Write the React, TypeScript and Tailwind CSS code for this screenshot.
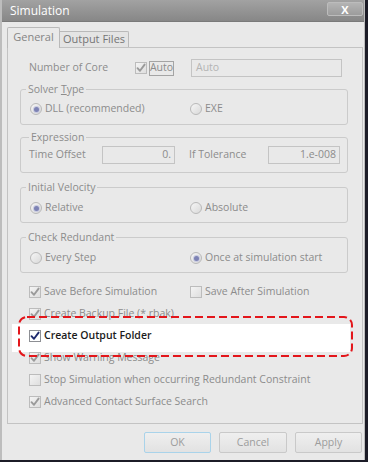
import type { ReactNode } from "react";

const GRAY = "text-[#8c8c8c]";

function Check({ on = true, dark = false }: { on?: boolean; dark?: boolean }) {
  return (
    <span
      className={`flex h-[12px] w-[12px] shrink-0 items-center justify-center border ${
        dark
          ? "border-[#8d8f94] bg-white"
          : "border-[#bcbcbc] bg-gradient-to-br from-[#f4f4f4] to-[#dedede]"
      }`}
    >
      {on && (
        <svg width="10" height="10" viewBox="0 0 10 10" fill="none">
          <path
            d="M1.5 5.2 L4 7.8 L8.6 1.6"
            stroke={dark ? "#1e2a6e" : "#9a9a9a"}
            strokeWidth="1.9"
            strokeLinecap="round"
            strokeLinejoin="round"
          />
        </svg>
      )}
    </span>
  );
}

function Radio({ on = false }: { on?: boolean }) {
  return (
    <span className="flex h-[12px] w-[12px] shrink-0 items-center justify-center rounded-full border border-[#b9b9b9] bg-gradient-to-br from-[#f6f6f6] to-[#d9d9d9]">
      {on && <span className="h-[5px] w-[5px] rounded-full bg-[#7d82b4] ring-1 ring-[#c9cbe0]" />}
    </span>
  );
}

function Group({
  title,
  pt,
  legendLeft = "left-[5px]",
  children,
}: {
  title: ReactNode;
  pt: string;
  legendLeft?: string;
  children: ReactNode;
}) {
  return (
    <div className={`relative h-[36px] w-[328px] rounded-[3px] border border-[#cbcbcb] ${pt}`}>
      <span className={`absolute -top-[8px] ${legendLeft} bg-[#e9e9e9] px-[2px] leading-[14px] ${GRAY}`}>
        {title}
      </span>
      {children}
    </div>
  );
}

function RadioRow({ a, b, first }: { a: string; b: string; first: boolean }) {
  return (
    <div className="flex h-[14px] items-center pl-[9px]">
      <div className="flex w-[160px] items-center gap-[3px]">
        <Radio on={first} />
        <span className={GRAY}>{a}</span>
      </div>
      <div className="flex items-center gap-[3px]">
        <Radio on={!first} />
        <span className={GRAY}>{b}</span>
      </div>
    </div>
  );
}

function CheckRow({ label, on = true, right }: { label: string; on?: boolean; right?: ReactNode }) {
  return (
    <div className="flex h-[22px] items-center pl-[9px]">
      <div className="flex w-[161px] shrink-0 items-center gap-[3px]">
        <Check on={on} />
        <span className={`whitespace-nowrap ${GRAY}`}>{label}</span>
      </div>
      {right}
    </div>
  );
}

export default function App() {
  return (
    <div className="h-[463px] w-[371px] bg-white font-['Segoe_UI','Open_Sans',sans-serif] text-[10.5px]">
      <div className="h-[462px] w-[368px] border-b-[2px] border-r-[3px] border-[#1c1c27]">
        <div className="flex h-full flex-col border-l-[2px] border-r border-[#bdbdbd] bg-[#e9e9e9]">
          {/* title bar */}
          <div className="flex h-[22px] shrink-0 items-start justify-between border-b border-[#7a7a7a] bg-gradient-to-b from-[#a2a2a2] to-[#878787]">
            <span className="pl-[8px] pt-[3px] text-[12px] leading-[16px] text-white">Simulation</span>
            <button className="mr-[1px] mt-[2px] flex h-[14px] w-[36px] items-center justify-center rounded-[2px] border border-[#bcbcbc] bg-gradient-to-b from-[#b4b4b4] to-[#9c9c9c] text-[11px] font-bold leading-none text-white">
              X
            </button>
          </div>

          {/* tabs */}
          <div className="mt-[5px] flex items-end pl-[5px]">
            <div className="relative z-10 -mb-px flex h-[21px] w-[53px] items-center justify-center rounded-t-[2px] border border-b-0 border-[#b9b9b9] bg-[#e9e9e9] pb-[2px] text-[11px] text-[#858585]">
              General
            </div>
            <div className="flex h-[16px] w-[69px] items-center justify-center rounded-tr-[2px] border border-b-0 border-l-0 border-[#b9b9b9] bg-[#e4e4e4] text-[11px] text-[#757575]">
              Output Files
            </div>
          </div>

          {/* panel */}
          <div className="relative ml-[5px] h-[377px] w-[356px] border border-[#c3c3c3] px-[12px]">
            {/* number of core */}
            <div className="mt-[11px] flex h-[18px] items-center pl-[9px]">
              <span className={`w-[106px] ${GRAY}`}>Number of Core</span>
              <Check />
              <span className={`ml-[2px] flex h-[15px] w-[25px] items-center justify-center border border-[#a4a4a4] ${GRAY}`}>
                Auto
              </span>
              <div className="ml-[17px] flex h-[18px] w-[151px] items-center border border-[#c4c4c4] pl-[4px] text-[#b4b4b4]">
                Auto
              </div>
            </div>

            <div className="mt-[12px]">
              <Group
                pt="pt-[12px]"
                title={
                  <>
                    Solver <span className="underline">T</span>ype
                  </>
                }
              >
                <RadioRow a="DLL (recommended)" b="EXE" first />
              </Group>
            </div>

            <div className="mt-[12px]">
              <Group pt="pt-[8px]" title="Expression" legendLeft="left-[8px]">
                <div className="flex h-[18px] items-center pl-[8px]">
                  <span className={`w-[73px] ${GRAY}`}>Time Offset</span>
                  <div className={`flex h-[18px] w-[73px] items-center justify-end border border-[#c4c4c4] pr-[3px] ${GRAY}`}>
                    0.
                  </div>
                  <span className={`ml-[14px] w-[79px] ${GRAY}`}>If Tolerance</span>
                  <div className={`flex h-[18px] w-[72px] items-center justify-end border border-[#c4c4c4] pr-[3px] ${GRAY}`}>
                    1.e-008
                  </div>
                </div>
              </Group>
            </div>

            <div className="mt-[14px]">
              <Group pt="pt-[13px]" title="Initial Velocity">
                <RadioRow a="Relative" b="Absolute" first />
              </Group>
            </div>

            <div className="mt-[14px]">
              <Group pt="pt-[13px]" title="Check Redundant">
                <RadioRow a="Every Step" b="Once at simulation start" first={false} />
              </Group>
            </div>

            {/* checkbox list */}
            <div className="mt-[8px]">
              <CheckRow
                label="Save Before Simulation"
                right={
                  <div className="flex items-center gap-[3px]">
                    <Check on={false} />
                    <span className={GRAY}>Save After Simulation</span>
                  </div>
                }
              />
              <CheckRow label="Create Backup File (*.rbak)" />
              <div className="relative z-10 flex h-[22px] items-center gap-[3px] pl-[9px]">
                <Check dark />
                <span className="font-semibold text-[#1b1b1b]">Create Output Folder</span>
              </div>
              <CheckRow label="Show Warning Message" />
              <CheckRow label="Stop Simulation when occurring Redundant Constraint" on={false} />
              <CheckRow label="Advanced Contact Surface Search" />
            </div>

            {/* highlight annotation */}
            <div className="absolute left-[4px] top-[276px] h-[28px] w-[338px] bg-white" />
            <svg className="pointer-events-none absolute left-[10px] top-[268px] z-20" width="336" height="42">
              <rect
                x="1"
                y="1"
                width="333"
                height="39"
                rx="8"
                fill="none"
                stroke="#e3161b"
                strokeWidth="2"
                strokeDasharray="8 4"
              />
            </svg>
          </div>

          {/* buttons */}
          <div className="mt-[8px] flex justify-end gap-[8px] pr-[2px]">
            <button className="h-[21px] w-[67px] rounded-[2px] border border-[#a9d3ea] bg-gradient-to-b from-[#efefef] to-[#e2e2e2] text-[#9c9c9c]">
              OK
            </button>
            <button className="h-[21px] w-[68px] rounded-[2px] border border-[#c9c9c9] bg-gradient-to-b from-[#efefef] to-[#e2e2e2] text-[#9c9c9c]">
              Cancel
            </button>
            <button className="h-[21px] w-[67px] rounded-[2px] border border-[#c9c9c9] bg-gradient-to-b from-[#efefef] to-[#e2e2e2] text-[#9c9c9c]">
              Apply
            </button>
          </div>
        </div>
      </div>
    </div>
  );
}
